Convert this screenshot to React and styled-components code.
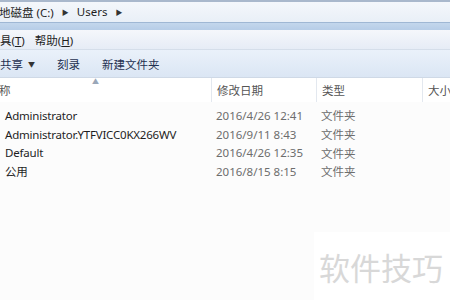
import styled, { createGlobalStyle } from "styled-components";

const GlobalStyle = createGlobalStyle`
  html, body {
    margin: 0;
    padding: 0;
    background: #fcfcfc;
    overflow: hidden;
  }
  body {
    font-family: "Noto Sans", "Noto Sans CJK SC", sans-serif;
    font-size: 11.5px;
    color: #1e1e1e;
  }
`;

const Window = styled.div`
  width: 450px;
  height: 300px;
  display: flex;
  flex-direction: column;
  position: relative;
  overflow: hidden;
  background: #fcfcfc;
`;

const AddressBar = styled.div`
  height: 19px;
  padding-bottom: 1px;
  border-top: 2px solid #a9b8cc;
  background: linear-gradient(#f4f7fb, #e9eff7);
  display: flex;
  align-items: center;
  gap: 8px;
  color: #1e1e1e;
  white-space: nowrap;
`;

const Crumb = styled.span`
  margin-left: ${(p) => (p.$first ? "-1px" : "0")};
`;

const Arrow = styled.span`
  font-size: 7px;
  color: #333;
`;

const Band = styled.div`
  height: 7px;
  border-top: 1px solid #9fb7d4;
  background: linear-gradient(#c3d6ec, #b7cde7);
`;

const MenuBar = styled.div`
  height: 19px;
  display: flex;
  align-items: center;
  gap: 10px;
  background: linear-gradient(#f5f7fb, #e6ecf6);
  border-bottom: 1px solid #d5deea;
  white-space: nowrap;
`;

const MenuItem = styled.span`
  u {
    text-decoration: underline;
  }
`;

const Toolbar = styled.div`
  height: 27px;
  display: flex;
  align-items: center;
  background: linear-gradient(#eaf1fa, #dbe6f4);
  border-bottom: 1px solid #cfd9e6;
  white-space: nowrap;
`;

const ToolButton = styled.span`
  margin-left: ${(p) => p.$ml}px;
  color: #1e3050;
  display: flex;
  align-items: center;
  gap: 5px;
`;

const Caret = styled.span`
  font-size: 7px;
  color: #333;
`;

const Header = styled.div`
  height: 24px;
  display: grid;
  grid-template-columns: 211px 105px 106px 1fr;
  background: #fff;
  color: #555;
  position: relative;
`;

const HeadCell = styled.div`
  display: flex;
  align-items: center;
  padding-left: ${(p) => p.$pl ?? 5}px;
  border-left: ${(p) => (p.$noBorder ? "none" : "1px solid #e3e8ef")};
  margin-left: ${(p) => p.$ml ?? 0}px;
  white-space: nowrap;
`;

const SortArrow = styled.span`
  position: absolute;
  left: 92px;
  top: -2px;
  font-size: 7px;
  color: #9aa7b8;
`;

const List = styled.div`
  padding-top: 4px;
  display: flex;
  flex-direction: column;
`;

const Row = styled.div`
  height: 18.7px;
  display: grid;
  grid-template-columns: 211px 105px 106px 1fr;
  align-items: center;
  white-space: nowrap;
`;

const NameCell = styled.span`
  padding-left: 5px;
  color: #1e1e1e;
  letter-spacing: -0.2px;
`;

const GrayCell = styled.span`
  padding-left: 5px;
  color: #6d6d6d;
`;

const Watermark = styled.div`
  position: absolute;
  left: 314px;
  top: 232px;
  width: 140px;
  height: 70px;
  background: #ffffff;
  color: #d8d8d8;
  font-family: "Noto Sans CJK SC", sans-serif;
  font-size: 31px;
  padding: 12px 0 0 5px;
  box-sizing: border-box;
  white-space: nowrap;
`;

const rows = [
  { name: "Administrator", date: "2016/4/26 12:41", type: "文件夹" },
  { name: "Administrator.YTFVICC0KX266WV", date: "2016/9/11 8:43", type: "文件夹" },
  { name: "Default", date: "2016/4/26 12:35", type: "文件夹" },
  { name: "公用", date: "2016/8/15 8:15", type: "文件夹" },
];

export default function App() {
  return (
    <Window>
      <GlobalStyle />
      <AddressBar>
        <Crumb $first>地磁盘 (C:)</Crumb>
        <Arrow>▶</Arrow>
        <Crumb>Users</Crumb>
        <Arrow>▶</Arrow>
      </AddressBar>
      <Band />
      <MenuBar>
        <MenuItem>
          具(<u>T</u>)
        </MenuItem>
        <MenuItem>
          帮助(<u>H</u>)
        </MenuItem>
      </MenuBar>
      <Toolbar>
        <ToolButton $ml={0}>
          共享 <Caret>▼</Caret>
        </ToolButton>
        <ToolButton $ml={22}>刻录</ToolButton>
        <ToolButton $ml={22}>新建文件夹</ToolButton>
      </Toolbar>
      <Header>
        <SortArrow>▲</SortArrow>
        <HeadCell $noBorder $pl={0} $ml={-1}>
          称
        </HeadCell>
        <HeadCell>修改日期</HeadCell>
        <HeadCell>类型</HeadCell>
        <HeadCell>大小</HeadCell>
      </Header>
      <List>
        {rows.map((r) => (
          <Row key={r.name}>
            <NameCell>{r.name}</NameCell>
            <GrayCell>{r.date}</GrayCell>
            <GrayCell>{r.type}</GrayCell>
            <span />
          </Row>
        ))}
      </List>
      <Watermark>软件技巧</Watermark>
    </Window>
  );
}
